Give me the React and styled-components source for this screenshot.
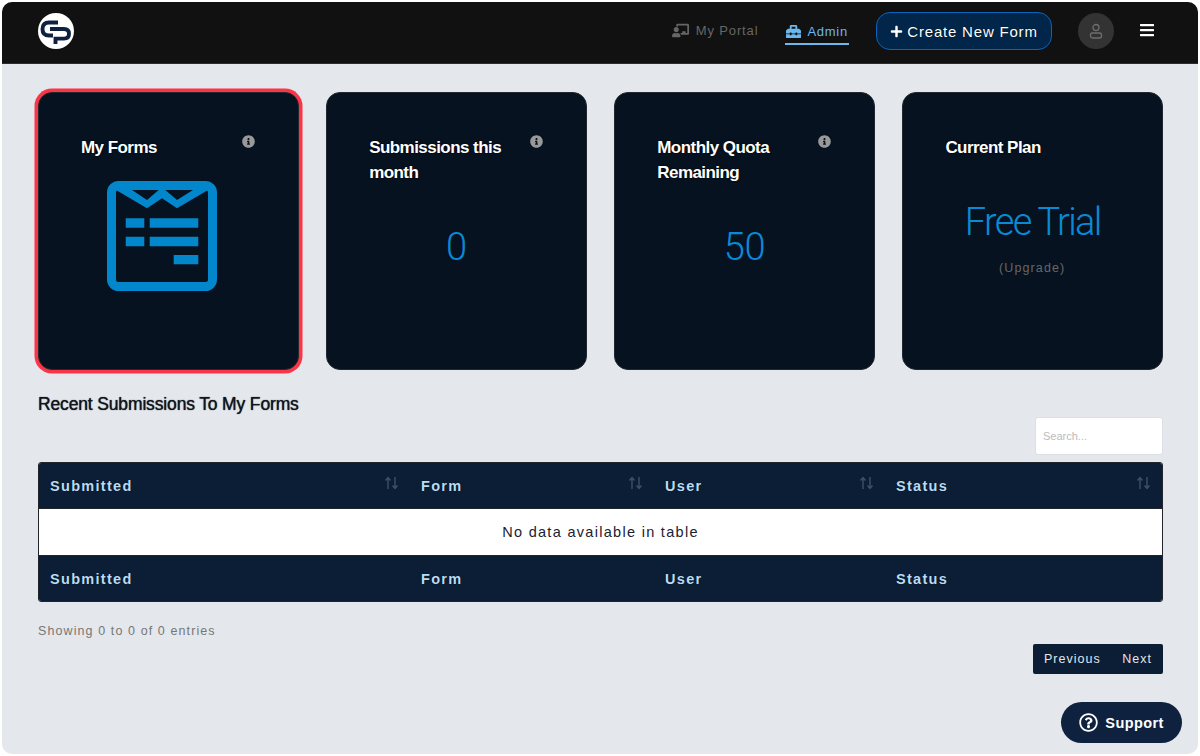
import styled, { createGlobalStyle } from 'styled-components';
import {
  FaChalkboardTeacher,
  FaToolbox,
  FaPlus,
  FaBars,
  FaInfoCircle,
  FaRegQuestionCircle,
} from 'react-icons/fa';

const GlobalStyle = createGlobalStyle`
  html, body {
    margin: 0;
    background: #fff;
    font-family: "Liberation Sans", Arial, sans-serif;
  }
  * { box-sizing: border-box; }
`;

const Window = styled.div`
  position: relative;
  margin: 2px;
  height: 752px;
  width: 1196px;
  border-radius: 10px;
  overflow: hidden;
  background: #e4e7eb;
`;

const Header = styled.header`
  height: 62px;
  background: #111;
  border-bottom: 1px solid #2c2c2c;
  display: flex;
  align-items: center;
  padding: 0 43px 3px 35px;
`;

const Logo = styled.svg`
  width: 38px;
  height: 38px;
  display: block;
`;

const Nav = styled.nav`
  margin-left: auto;
  display: flex;
  align-items: center;
`;

const NavLink = styled.a`
  display: flex;
  align-items: center;
  gap: ${({ $active }) => ($active ? 6 : 7)}px;
  height: 26px;
  padding: 0 1px;
  margin-right: ${({ $active }) => ($active ? 27 : 26)}px;
  margin-top: ${({ $active }) => ($active ? 2 : 0)}px;
  font-size: 13px;
  letter-spacing: ${({ $active }) => ($active ? 0.75 : 0.85)}px;
  color: ${({ $active }) => ($active ? '#6db7ef' : '#666')};
  border-bottom: 2px solid ${({ $active }) => ($active ? '#6db7ef' : 'transparent')};
  svg { font-size: ${({ $active }) => ($active ? 15 : 17)}px; }
`;

const CreateButton = styled.button`
  width: 176px;
  height: 38px;
  border-radius: 14px;
  border: 1.5px solid #0a63bd;
  background: #02264a;
  color: #fff;
  font: 400 15px "Liberation Sans", Arial, sans-serif;
  letter-spacing: 0.8px;
  display: flex;
  align-items: center;
  justify-content: center;
  gap: 4px;
  padding: 0;
  margin-right: 26px;
  text-shadow: 0 0 1px #000;
  svg { font-size: 13px; }
`;

const Avatar = styled.div`
  width: 36px;
  height: 36px;
  border-radius: 50%;
  background: #333;
  display: flex;
  align-items: center;
  justify-content: center;
  margin-right: 25px;
`;

const MenuButton = styled.div`
  color: #fff;
  display: flex;
  font-size: 16px;
  margin-top: -2px;
`;

const Main = styled.main`
  padding: 28px 35px 0 36px;
`;

const Cards = styled.div`
  display: grid;
  grid-template-columns: repeat(4, 1fr);
  gap: 27.5px;
`;

const Card = styled.section`
  height: 278px;
  background: #061220;
  border: 1px solid #23272e;
  border-radius: 14px;
  padding: 42px 43px 0 42px;
  box-shadow: ${({ $selected }) => ($selected ? '0 0 0 3.5px #fb3548' : 'none')};
`;

const CardHead = styled.div`
  display: flex;
  align-items: flex-start;
  justify-content: space-between;
  gap: 10px;
`;

const CardTitle = styled.h3`
  margin: 0;
  color: #fff;
  font-size: 17px;
  line-height: 25px;
  font-weight: 700;
  letter-spacing: -0.55px;
  text-shadow: 0 0 2px #000;
`;

const Info = styled.span`
  display: flex;
  flex: none;
  color: #999;
  font-size: 13px;
`;

const CardValue = styled.div`
  margin: 40px 0 0 1px;
  text-align: center;
  font-family: Roboto, "Liberation Sans", sans-serif;
  font-weight: 300;
  font-size: 38px;
  line-height: 44px;
  letter-spacing: ${({ $tight }) => ($tight ? -1.7 : -0.3)}px;
  color: #0a8ad6;
`;

const Upgrade = styled.div`
  margin-top: 17px;
  text-align: center;
  font-size: 12.5px;
  letter-spacing: 1.1px;
  color: #666;
`;

const FormsIcon = styled.svg`
  display: block;
  width: 110px;
  height: 110px;
  margin: 21px 0 0 26px;
`;

const SectionTitle = styled.h2`
  margin: 22px 0 0;
  font-size: 17.5px;
  line-height: 24px;
  font-weight: 400;
  letter-spacing: -0.15px;
  color: #10151d;
  text-shadow: 0 0 1px #10151d;
`;

const SearchRow = styled.div`
  display: flex;
  justify-content: flex-end;
  margin: 1px 0 7px;
`;

const SearchInput = styled.input`
  width: 128px;
  height: 38px;
  border: 1px solid #dcdfe3;
  border-radius: 3px;
  background: #fff;
  padding: 0 7px;
  font: 400 11px "Liberation Sans", Arial, sans-serif;
  outline: none;
  &::placeholder { color: #bbb; }
`;

const Table = styled.table`
  width: 100%;
  table-layout: fixed;
  border-collapse: separate;
  border-spacing: 0;
  border: 1px solid #20242b;
  border-radius: 3px;
  overflow: hidden;
`;

const HeadCell = styled.th`
  height: 45px;
  padding: 0 11px;
  background: #0c1e36;
  color: #b9dcf5;
  font-size: 14.5px;
  font-weight: 700;
  letter-spacing: 1.3px;
  text-align: left;
  text-shadow: 0 0 1px #000;
`;

const HeadInner = styled.div`
  display: flex;
  align-items: center;
  justify-content: space-between;
`;

const Sort = styled.svg`
  width: 15px;
  height: 14px;
  margin-top: -6px;
`;

const EmptyCell = styled.td`
  height: 48px;
  background: #fff;
  border-top: 1px solid #20242b;
  border-bottom: 1px solid #20242b;
  text-align: center;
  font-size: 14.5px;
  letter-spacing: 1.3px;
  color: #1a2230;
`;

const Showing = styled.div`
  margin-top: 21px;
  font-size: 12.5px;
  line-height: 16px;
  letter-spacing: 1.1px;
  color: #777;
`;

const PagerRow = styled.div`
  display: flex;
  justify-content: flex-end;
  margin-top: 5px;
`;

const Pager = styled.div`
  display: flex;
  align-items: center;
  justify-content: space-between;
  width: 130px;
  height: 30px;
  padding: 0 11px;
  background: #0c1e36;
  border-radius: 2px;
  color: #e2e6ea;
  font-size: 12.5px;
  letter-spacing: 1px;
`;

const Support = styled.button`
  position: absolute;
  right: 16px;
  bottom: 11px;
  width: 121px;
  height: 41px;
  border: 0;
  border-radius: 21px;
  background: #0e2240;
  color: #fff;
  font: 700 14.5px "Liberation Sans", Arial, sans-serif;
  letter-spacing: 0.4px;
  display: flex;
  align-items: center;
  justify-content: center;
  gap: 7px;
  padding: 0;
  svg { font-size: 19px; }
`;

const columns = [
  { name: 'Submitted', width: 371 },
  { name: 'Form', width: 244 },
  { name: 'User', width: 231 },
  { name: 'Status', width: 277 },
];

const SortArrows = () => (
  <Sort viewBox="0 0 15 14" fill="none" stroke="#3c5069" strokeWidth="1.4">
    <path d="M4 13V2M1.5 4.5L4 1.5l2.5 3" />
    <path d="M11 1v11M8.5 9.5l2.5 3 2.5-3" />
  </Sort>
);

const stats = [
  { title: 'Submissions this month', value: '0' },
  { title: 'Monthly Quota Remaining', value: '50' },
];

export default function App() {
  return (
    <Window>
      <GlobalStyle />
      <Header>
        <Logo viewBox="0 0 38 38">
          <circle cx="19" cy="19" r="18" fill="#fff" />
          <g fill="none" stroke="#0e2240" strokeWidth="3.9">
            <path d="M21 10.5H12Q5.5 10.5 5.5 17Q5.5 23.5 12 23.5H16" />
            <path d="M13 17H27Q32 17 32 21.8Q32 26.6 27 26.6H18.5V32" />
          </g>
        </Logo>
        <Nav>
          <NavLink>
            <FaChalkboardTeacher />
            My Portal
          </NavLink>
          <NavLink $active>
            <FaToolbox />
            Admin
          </NavLink>
          <CreateButton>
            <FaPlus />
            Create New Form
          </CreateButton>
          <Avatar>
            <svg width="16" height="16" viewBox="0 0 16 16" fill="none" stroke="#6e6e6e" strokeWidth="1.3">
              <circle cx="8" cy="4.5" r="3" />
              <rect x="2.5" y="10" width="11" height="5" rx="2" />
            </svg>
          </Avatar>
          <MenuButton>
            <FaBars />
          </MenuButton>
        </Nav>
      </Header>
      <Main>
        <Cards>
          <Card $selected>
            <CardHead>
              <CardTitle>My Forms</CardTitle>
              <Info><FaInfoCircle /></Info>
            </CardHead>
            <FormsIcon viewBox="0 0 110 110">
              <rect x="4.5" y="4.5" width="101" height="101" rx="7" fill="none" stroke="#0287cc" strokeWidth="9" />
              <path fill="#0287cc" d="M9 9L40 27.3L55 17.3L70 27.3L101 9H86L70 19L58.3 9H51.7L40 19L25 9Z" />
              <path fill="#0287cc" d="M18.7 37.3H37.3V46.7H18.7ZM42.7 37.3H91.3V46.7H42.7ZM18.7 55.7H37.3V65.3H18.7ZM42.7 55.7H91.3V65.3H42.7ZM66.7 74H91.3V83.3H66.7Z" />
            </FormsIcon>
          </Card>
          {stats.map((s) => (
            <Card key={s.title}>
              <CardHead>
                <CardTitle>{s.title}</CardTitle>
                <Info><FaInfoCircle /></Info>
              </CardHead>
              <CardValue>{s.value}</CardValue>
            </Card>
          ))}
          <Card>
            <CardTitle>Current Plan</CardTitle>
            <CardValue $tight>Free Trial</CardValue>
            <Upgrade>(Upgrade)</Upgrade>
          </Card>
        </Cards>

        <SectionTitle>Recent Submissions To My Forms</SectionTitle>
        <SearchRow>
          <SearchInput placeholder="Search..." />
        </SearchRow>
        <Table>
          <colgroup>
            {columns.map((c) => <col key={c.name} width={c.width} />)}
          </colgroup>
          <thead>
            <tr>
              {columns.map((c) => (
                <HeadCell key={c.name}>
                  <HeadInner>
                    {c.name}
                    <SortArrows />
                  </HeadInner>
                </HeadCell>
              ))}
            </tr>
          </thead>
          <tbody>
            <tr>
              <EmptyCell colSpan={4}>No data available in table</EmptyCell>
            </tr>
          </tbody>
          <tfoot>
            <tr>
              {columns.map((c) => <HeadCell key={c.name}>{c.name}</HeadCell>)}
            </tr>
          </tfoot>
        </Table>
        <Showing>Showing 0 to 0 of 0 entries</Showing>
        <PagerRow>
          <Pager>
            <span>Previous</span>
            <span>Next</span>
          </Pager>
        </PagerRow>
      </Main>
      <Support>
        <FaRegQuestionCircle />
        Support
      </Support>
    </Window>
  );
}
